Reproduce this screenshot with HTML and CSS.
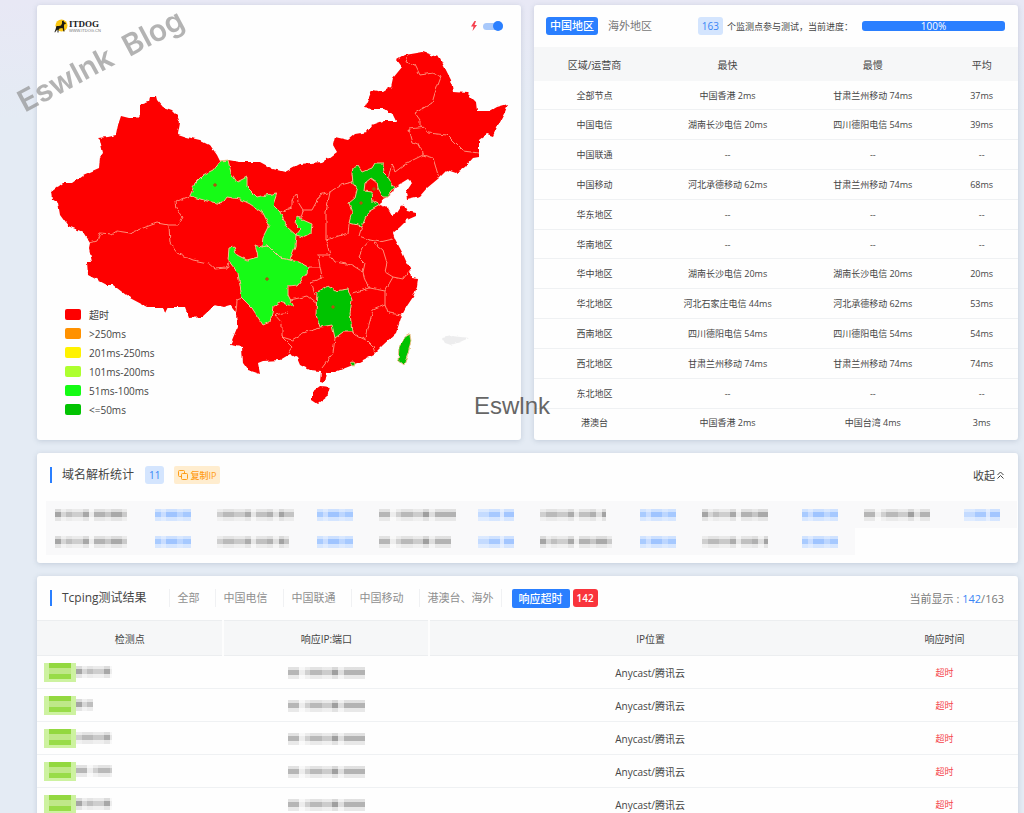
FILE: index.html
```html
<!DOCTYPE html>
<html lang="zh-CN">
<head>
  <meta charset="UTF-8" />
  <meta name="viewport" content="width=device-width, initial-scale=1.0" />
  <title>Tcping - ITDOG</title>
  <link rel="stylesheet" href="styles.css">
</head>
<body>
  <main class="page">
    <div class="top-row">
      <section class="card map-card">
        <div class="map-toolbar">
          <a class="logo" href="#">
            <svg width="14" height="14" viewBox="0 0 28 28" aria-hidden="true">
              <circle cx="15" cy="13" r="12" fill="#fbc712"/>
              <path d="M19 3l1 3 4 2-1 2-3 1 0 6 1 8-2 0-2-7-6 1-2 3 0 5-2 0 0-6-3 3-2 3-1-1 2-5 2-7 5 0 4-1 2-4 0-5z" fill="#1d1a10"/>
            </svg>
            <span class="logo-text">
              <b>ITDOG</b>
              <small>WWW.ITDOG.CN</small>
            </span>
          </a>
          <label class="speed">
            <svg width="8" height="10" viewBox="0 0 8 10" aria-hidden="true"><path d="M4.5 0L1 5.5h2.5L2.5 10 7 4H4.5L6 0z" fill="#f5414f"/></svg>
            <input type="checkbox" class="switch" aria-label="极速模式" checked>
          </label>
        </div>

        <svg class="map" viewBox="37 47 484 393" role="img" aria-label="中国地图">
          <defs>
            <filter id="coast" x="-5%" y="-5%" width="110%" height="110%">
              <feTurbulence type="fractalNoise" baseFrequency="0.2" numOctaves="1" seed="4" result="n"/>
              <feDisplacementMap in="SourceGraphic" in2="n" scale="4" xChannelSelector="R" yChannelSelector="G"/>
            </filter>
          </defs>
          <g filter="url(#coast)">
            <!-- mainland -->
            <path class="lv-timeout" d="M98 138L107 137 116 135 118 125 121 116 129 118 137 118 140 115 140 105 149 102 150 96 156 96 157 100 163 107 172 110 177 115 180 123 178 134 187 137 200 140 210 145 217 155 220 161 228 160 240 162 253 162 260 162 273 169 285 172 300 164 322 162 329 158 337 152 333 145 335 137 348 140 355 134 367 132 372 125 383 121 396 121 393 115 384 109 373 109 364 108 367 102 372 90 383 92 391 87 393 78 402 67 397 60 405 55 423 52 440 58 445 68 451 80 453 92 467 93 476 102 477 111 490 111 497 107 508 104 505 112 498 125 493 136 487 134 479 140 479 157 473 158 465 167 456 173 447 170 439 178 427 188 420 196 407 199 406 192 412 183 408 179 395 187 393 192 387 197 381 200 380 205 388 208 392 215 397 213 403 204 407 211 416 213 416 216 407 220 400 227 393 233 395 239 402 252 406 261 410 268 411 278 418 279 417 287 413 297 407 306 402 315 396 333 383 345 373 355 353 365 335 372 327 372 325 383 320 382 321 371 310 370 300 365 297 358 290 354 280 360 263 361 258 363 260 374 248 370 243 363 242 347 230 345 237 328 236 313 230 305 223 307 215 305 202 317 189 318 185 307 168 307 165 313 163 307 147 307 130 298 113 285 107 285 88 275 87 262 92 262 89 248 90 243 83 232 68 226 60 215 58 203 52 199 51 192 63 183 72 183 83 175 99 168 100 157 103 153 100 140z"/>
            <!-- hainan -->
            <path class="lv-timeout" d="M330 387L327 397 318 404 312 400 312 392 320 386z"/>

            <g class="borders">
              <path d="M90 243L97 241 100 233 112 234 117 231 130 233 143 228 157 223 168 225 178 225 182 217 176 208 175 202 190 196"/>
              <path d="M169 226L170 243 177 253 193 260 208 263 215 269 227 268 230 260M242 298L237 300 236 313"/>
              <path d="M408 56L406 62 415 65 420 75 433 73 441 77 435 93 432 103 415 113 420 120 420 127"/>
              <path d="M409 129L425 127 428 133 447 135 457 145 463 151 479 153M409 129L413 143 422 147 423 155 433 158 439 178"/>
              <path d="M423 155L407 163 395 172 392 163 390 172 388 177"/>
              <path d="M353 182L340 185 330 192 320 195 312 210 303 210 298 202 297 193 292 200 292 208 280 212M330 192L326 212 326 240 348 233 349 224"/>
              <path d="M303 210L301 217 297 218M362 226L359 236 370 240 380 242 393 239"/>
              <path d="M326 240L330 255 335 262 352 265 363 272 365 280 370 288 385 291 393 277 403 279 410 270"/>
              <path d="M370 240L363 248 359 257 365 263 363 272M373 242L383 250 387 263 385 272 393 277"/>
              <path d="M370 288L352 293M385 291L385 305 373 310 368 328 366 340 355 335 352 332M385 305L388 313 402 315M366 340L373 347 375 353"/>
              <path d="M330 255L318 255 320 267 308 267M320 267L322 278 311 282 315 295M290 300L308 296 317 303"/>
              <path d="M288 312L275 315 282 323 282 337 292 340 303 333 320 328M282 337L292 347 288 353M335 338L333 353 322 368"/>
            </g>

            <!-- gansu, sichuan -->
            <path class="lv-100" d="M190 196L195 183 203 175 213 170 220 161 228 160 231 173 237 182 247 177 247 187 257 197 261 196 277 193 273 205 280 212 287 227 296 235 301 229 296 224 297 217 303 220 312 224 311 233 303 237 296 235 295 247 290 260 280 258 268 246 262 247 263 237 269 225 263 213 250 204 240 199 227 197 222 204 207 201z"/>
            <path class="lv-100" d="M290 260L299 262 308 267 307 273 298 285 288 286 288 295 294 307 280 302 273 307 270 322 263 325 252 308 242 298 238 273 228 260 229 248 234 247 237 255 247 260 258 257 255 245 262 247 268 246 280 258z"/>
            <!-- hebei -->
            <path class="lv-50" fill-rule="evenodd" d="M353 168L358 166 362 172 372 168 375 163 383 163 384 173 388 177 394 188 387 197 383 197 378 188 377 182 371 178 365 183 364 191 372 192 373 202 380 205 368 212 362 226 349 223 352 212 349 203 355 198 357 190 353 183 352 173z"/>
            <!-- hunan -->
            <path class="lv-50" d="M317 292L328 286 335 291 348 289 352 300 350 313 352 332 343 332 335 338 332 325 320 327 316 315z"/>
            <!-- taiwan, hong kong -->
            <path class="lv-50" d="M410 334L411 341 408 354 404 365 398 360 399 347 405 337z"/>
            <circle class="lv-50" cx="353" cy="364" r="2"/>
            <path fill="#ededee" d="M442 338L452 336 469 338 460 342 451 345 445 343z"/>
          </g>
          <g class="points">
            <circle cx="215" cy="185" r="1.3"/>
            <circle cx="267" cy="279" r="1.3"/>
            <circle cx="361" cy="203" r="1.3"/>
            <circle cx="333" cy="307" r="1.3"/>
            <circle cx="374" cy="189" r="1.3"/>
          </g>
        </svg>

        <ul class="legend">
          <li><i class="swatch c-timeout"></i>超时</li>
          <li><i class="swatch c-250"></i>&gt;250ms</li>
          <li><i class="swatch c-201"></i>201ms-250ms</li>
          <li><i class="swatch c-101"></i>101ms-200ms</li>
          <li><i class="swatch c-51"></i>51ms-100ms</li>
          <li><i class="swatch c-50"></i>&lt;=50ms</li>
        </ul>
      </section>

      <section class="card region-card">
        <div class="region-head">
          <button class="region-tab active">中国地区</button>
          <button class="region-tab">海外地区</button>
          <div class="progress-info">
            <span class="badge">163</span>
            <span>个监测点参与测试，当前进度：</span>
          </div>
          <div class="progress" role="progressbar" aria-valuenow="100" aria-valuemin="0" aria-valuemax="100">100%</div>
        </div>
        <div class="region-body">
          <table class="region-table">
            <thead>
              <tr><th>区域/运营商</th><th>最快</th><th>最慢</th><th>平均</th></tr>
            </thead>
            <tbody>
              <tr><td>全部节点</td><td>中国香港 2ms</td><td>甘肃兰州移动 74ms</td><td>37ms</td></tr>
              <tr><td>中国电信</td><td>湖南长沙电信 20ms</td><td>四川德阳电信 54ms</td><td>39ms</td></tr>
              <tr><td>中国联通</td><td>--</td><td>--</td><td>--</td></tr>
              <tr><td>中国移动</td><td>河北承德移动 62ms</td><td>甘肃兰州移动 74ms</td><td>68ms</td></tr>
              <tr><td>华东地区</td><td>--</td><td>--</td><td>--</td></tr>
              <tr><td>华南地区</td><td>--</td><td>--</td><td>--</td></tr>
              <tr><td>华中地区</td><td>湖南长沙电信 20ms</td><td>湖南长沙电信 20ms</td><td>20ms</td></tr>
              <tr><td>华北地区</td><td>河北石家庄电信 44ms</td><td>河北承德移动 62ms</td><td>53ms</td></tr>
              <tr><td>西南地区</td><td>四川德阳电信 54ms</td><td>四川德阳电信 54ms</td><td>54ms</td></tr>
              <tr><td>西北地区</td><td>甘肃兰州移动 74ms</td><td>甘肃兰州移动 74ms</td><td>74ms</td></tr>
              <tr><td>东北地区</td><td>--</td><td>--</td><td>--</td></tr>
              <tr><td>港澳台</td><td>中国香港 2ms</td><td>中国台湾 4ms</td><td>3ms</td></tr>
            </tbody>
          </table>
        </div>
      </section>
    </div>

    <section class="card">
      <div class="card-head">
        <h2>域名解析统计</h2>
        <span class="badge badge-count">11</span>
        <button class="copy-btn">
          <svg width="10" height="10" viewBox="0 0 10 10" fill="none" stroke="#ff9d17" aria-hidden="true"><path d="M3 6.5H1.5a1 1 0 0 1-1-1v-4a1 1 0 0 1 1-1h4a1 1 0 0 1 1 1V3"/><rect x="3.5" y="3.5" width="6" height="6" rx="1"/></svg>
          复制IP
        </button>
        <button class="fold-btn">
          收起
          <svg width="7" height="8" viewBox="0 0 7 8" fill="none" stroke="#444" aria-hidden="true"><path d="M.5 4l3-3 3 3M.5 7.5l3-3 3 3"/></svg>
        </button>
      </div>
      <div class="ip-grid">
        <div class="ip-item"><span class="mask w-l"></span><span class="mask blue w-s"></span></div>
        <div class="ip-item"><span class="mask m2 w-xl"></span><span class="mask blue m2 w-s"></span></div>
        <div class="ip-item"><span class="mask m3 w-xl"></span><span class="mask blue m3 w-s"></span></div>
        <div class="ip-item"><span class="mask m2 w-m"></span><span class="mask blue w-s"></span></div>
        <div class="ip-item"><span class="mask w-m"></span><span class="mask blue m2 w-s"></span></div>
        <div class="ip-item"><span class="mask m3 w-m"></span><span class="mask blue m3 w-s"></span></div>
        <div class="ip-item"><span class="mask w-l"></span><span class="mask blue m2 w-s"></span></div>
        <div class="ip-item"><span class="mask m2 w-l"></span><span class="mask blue w-s"></span></div>
        <div class="ip-item"><span class="mask m3 w-l"></span><span class="mask blue m3 w-s"></span></div>
        <div class="ip-item"><span class="mask w-l"></span><span class="mask blue w-s"></span></div>
        <div class="ip-item"><span class="mask m2 w-m"></span><span class="mask blue m2 w-s"></span></div>
      </div>
    </section>

    <section class="card">
      <div class="card-head">
        <h2>Tcping测试结果</h2>
        <nav class="tabs">
          <a href="#">全部</a>
          <a href="#">中国电信</a>
          <a href="#">中国联通</a>
          <a href="#">中国移动</a>
          <a href="#">港澳台、海外</a>
        </nav>
        <button class="timeout-btn">响应超时</button>
        <span class="badge badge-red">142</span>
        <span class="showing">当前显示 : <b>142</b>/163</span>
      </div>
      <table class="result-table">
        <thead>
          <tr><th>检测点</th><th>响应IP:端口</th><th>IP位置</th><th>响应时间</th></tr>
        </thead>
        <tbody>
          <tr><td><div class="node"><span class="isp"></span><span class="mask w-s"></span></div></td><td><span class="mask m3 w-xl"></span></td><td>Anycast/腾讯云</td><td class="red">超时</td></tr>
          <tr><td><div class="node"><span class="isp"></span><span class="mask w-xs"></span></div></td><td><span class="mask m3 w-xl"></span></td><td>Anycast/腾讯云</td><td class="red">超时</td></tr>
          <tr><td><div class="node"><span class="isp"></span><span class="mask m2 w-s"></span></div></td><td><span class="mask m3 w-xl"></span></td><td>Anycast/腾讯云</td><td class="red">超时</td></tr>
          <tr><td><div class="node"><span class="isp"></span><span class="mask m3 w-s"></span></div></td><td><span class="mask m3 w-xl"></span></td><td>Anycast/腾讯云</td><td class="red">超时</td></tr>
          <tr><td><div class="node"><span class="isp"></span><span class="mask w-s"></span></div></td><td><span class="mask m3 w-xl"></span></td><td>Anycast/腾讯云</td><td class="red">超时</td></tr>
        </tbody>
      </table>
    </section>

    <div class="watermark-blog">Eswlnk&nbsp; Blog</div>
    <div class="watermark">Eswlnk</div>
  </main>
</body>
</html>
```
FILE: styles.css
```css
:root {
  --blue: #2a7fff;
  --text: #454545;
  --line: #eff1f3;
  --head: #f6f7f8;
}

* {
  box-sizing: border-box;
}

body {
  margin: 0;
  font-family: "Open Sans", "Noto Sans CJK SC", sans-serif;
  font-size: 10px;
  color: var(--text);
  background: linear-gradient(#e8e8f5, #e4ebf4 120px);
}

button {
  font-family: inherit;
  border: none;
  padding: 0;
  background: none;
  cursor: pointer;
}

a {
  color: inherit;
  text-decoration: none;
}

.page {
  position: relative;
  display: flex;
  flex-direction: column;
  gap: 13px;
  height: 100vh;
  overflow: hidden;
  padding: 5px 6px 0 37px;
}

.card {
  flex-shrink: 0;
  background: #fefefe;
  border-radius: 3px;
  box-shadow: 0 1px 5px rgba(120, 135, 160, 0.3);
}

.top-row {
  flex-shrink: 0;
  display: grid;
  grid-template-columns: 1fr 1fr;
  gap: 13px;
}

/* map */
.map-card {
  position: relative;
}

.map-toolbar {
  display: flex;
  justify-content: space-between;
  align-items: center;
  height: 42px;
  padding: 0 18px 0 17px;
}

.logo,
.speed {
  display: flex;
  align-items: center;
  gap: 1px;
}

.speed {
  gap: 5px;
}

.logo-text {
  display: flex;
  flex-direction: column;
  color: #222;
}

.logo-text b {
  font: bold 9px/9px "Liberation Serif", serif;
}

.logo-text small {
  font: 4px/4px "Liberation Sans", sans-serif;
  color: #777;
}

.switch {
  appearance: none;
  display: flex;
  justify-content: flex-end;
  align-items: center;
  width: 20px;
  height: 7px;
  margin: 0;
  border-radius: 4px;
  background: #a9c9fb;
}

.switch::before {
  content: "";
  width: 10px;
  height: 10px;
  border-radius: 50%;
  background: var(--blue);
}

.map {
  display: block;
  width: 100%;
}

.lv-timeout {
  fill: #fe0000;
}

.lv-100 {
  fill: #14fb14;
}

.lv-50 {
  fill: #02c302;
}

.lv-100,
.lv-50 {
  stroke: #f3c08c;
  stroke-width: 1;
}

.borders {
  fill: none;
  stroke: #ff8d78;
  stroke-width: 1;
}

.points {
  fill: #f03010;
  stroke: #8a6a10;
  stroke-width: 1;
}

.legend {
  position: absolute;
  left: 28px;
  bottom: 21px;
  margin: 0;
  padding: 0;
  list-style: none;
}

.legend li {
  display: flex;
  align-items: center;
  gap: 8px;
  height: 19px;
}

.swatch {
  width: 16px;
  height: 11px;
  border-radius: 2px;
}

.c-timeout { background: #fe0000; }
.c-250 { background: #ff9100; }
.c-201 { background: #fff200; }
.c-101 { background: #adff2f; }
.c-51 { background: #14fb14; }
.c-50 { background: #02c302; }

/* region table */
.region-card {
  display: flex;
  flex-direction: column;
  padding-bottom: 3px;
}

.region-head {
  display: flex;
  align-items: center;
  height: 42px;
  padding: 0 13px 0 12px;
}

.region-tab {
  height: 18px;
  padding: 0 4px;
  font-size: 11px;
  line-height: 18px;
  color: #777;
  margin-right: 6px;
  border-radius: 3px;
}

.region-tab.active {
  background: var(--blue);
  color: #fff;
  font-weight: 500;
}

.progress-info {
  display: flex;
  align-items: center;
  gap: 4px;
  margin-left: auto;
  font-size: 9px;
}

.badge {
  height: 18px;
  padding: 0 4px;
  border-radius: 3px;
  font-size: 10px;
  line-height: 18px;
  background: #d4e5fe;
  color: #3a86f5;
}

.progress {
  width: 143px;
  height: 10px;
  margin-left: 9px;
  border-radius: 3px;
  background: var(--blue);
  color: #fff;
  font-size: 10px;
  line-height: 10px;
  text-align: center;
}

.region-body {
  flex: 1;
  display: grid;
}

table {
  width: 100%;
  table-layout: fixed;
  border-collapse: collapse;
}

th {
  font-weight: normal;
  background: var(--head);
}

th,
td {
  padding: 0;
  text-align: center;
}

td {
  border-bottom: 1px solid var(--line);
}

.region-table {
  height: 100%;
  font-size: 9px;
}

.region-table th {
  height: 34px;
  width: 30%;
  font-size: 10px;
}

.region-table th:first-child {
  width: 25%;
}

.region-table th:last-child {
  width: 15%;
}

.region-table tr:last-child td {
  border-bottom: none;
}

/* section heads */
.card-head {
  display: flex;
  align-items: center;
  height: 44px;
  padding: 0 14px 0 13px;
}

h2 {
  margin: 0;
  padding-left: 10px;
  border-left: 2px solid var(--blue);
  font-size: 12px;
  font-weight: normal;
  line-height: 16px;
}

.badge-count {
  margin-left: 11px;
}

.copy-btn {
  display: flex;
  align-items: center;
  gap: 2px;
  height: 18px;
  margin-left: 10px;
  padding: 0 4px;
  border-radius: 2px;
  background: #ffedcf;
  color: #ff9d17;
  font-size: 9px;
  font-weight: 500;
}

.fold-btn {
  display: flex;
  align-items: center;
  gap: 2px;
  margin-left: auto;
  color: #444;
  font-size: 11px;
}

.ip-grid {
  display: grid;
  grid-template-columns: repeat(6, 1fr);
  padding: 4px 1px 8px 9px;
}

.ip-item {
  display: flex;
  justify-content: space-between;
  align-items: center;
  height: 27px;
  padding: 1px 17px 0 9px;
  background: #f9f9fa;
}

/* pixelated hidden addresses */
.mask {
  display: inline-block;
  height: 12px;
  vertical-align: middle;
  background:
    linear-gradient(transparent 8px, rgba(255, 255, 255, 0.7) 8px),
    linear-gradient(rgba(255, 255, 255, 0.6) 3px, transparent 3px),
    linear-gradient(90deg, #a5a5a5 6px, #d6d6d6 6px 11px, #bfbfbf 11px 17px, #cecece 17px 28px, #a8a8a8 28px 34px, #ececec 34px 39px, #b2b2b2 39px 50px, #c6c6c6 50px 56px, #a9a9a9 56px 67px, #cacaca 67px);
}

.mask.m2 {
  background:
    linear-gradient(transparent 8px, rgba(255, 255, 255, 0.7) 8px),
    linear-gradient(rgba(255, 255, 255, 0.6) 3px, transparent 3px),
    linear-gradient(90deg, #cfcfcf 6px, #bababa 6px 17px, #c9c9c9 17px 28px, #acacac 28px 34px, #e6e6e6 34px 39px, #c0c0c0 39px 50px, #b0b0b0 50px 56px, #dedede 56px 62px, #a3a3a3 62px 67px, #c4c4c4 67px);
}

.mask.m3 {
  background:
    linear-gradient(transparent 8px, rgba(255, 255, 255, 0.7) 8px),
    linear-gradient(rgba(255, 255, 255, 0.6) 3px, transparent 3px),
    linear-gradient(90deg, #b6b6b6 11px, #ededed 11px 17px, #d0d0d0 17px 22px, #b9b9b9 22px 34px, #cccccc 34px 44px, #9f9f9f 44px 50px, #dddddd 50px 56px, #b3b3b3 56px);
}

.mask.blue {
  background:
    linear-gradient(transparent 8px, rgba(235, 243, 255, 0.7) 8px),
    linear-gradient(rgba(235, 243, 255, 0.6) 3px, transparent 3px),
    linear-gradient(90deg, #a9cbff 6px, #c9ddff 6px 11px, #9fc4ff 11px 22px, #bcd6ff 22px 28px, #a6c9ff 28px);
}

.mask.blue.m3 {
  background:
    linear-gradient(transparent 8px, rgba(235, 243, 255, 0.7) 8px),
    linear-gradient(rgba(235, 243, 255, 0.6) 3px, transparent 3px),
    linear-gradient(90deg, #c4dbff 11px, #a7c9ff 11px 22px, #dbe8ff 22px 26px, #a3c6ff 26px);
}

.w-xs { width: 17px; }
.w-s { width: 36px; }
.w-m { width: 66px; }
.w-l { width: 72px; }
.w-xl { width: 77px; }

/* results */
.tabs {
  display: flex;
  margin-left: 22px;
}

.tabs a {
  padding: 0 15px 0 8px;
  border-left: 1px solid #f0f1f3;
  color: #8f8f8f;
  font-size: 11px;
  line-height: 18px;
}

.tabs a:last-child {
  padding-right: 7px;
  border-right: 1px solid #f0f1f3;
}

.timeout-btn {
  height: 19px;
  margin-left: 10px;
  padding: 0 7px;
  border-radius: 2px;
  background: var(--blue);
  color: #fff;
  font-size: 11px;
  font-weight: 500;
  line-height: 19px;
}

.badge-red {
  margin-left: 3px;
  background: #f9343c;
  color: #fff;
  font-weight: 600;
}

.showing {
  margin-left: auto;
  color: #777;
  font-size: 11px;
}

.showing b {
  color: #3a86f5;
  font-weight: normal;
}

.result-table th {
  width: 19%;
  height: 35px;
  border: 1px solid #eceef0;
  border-width: 1px 0;
}

.result-table th + th {
  width: 21%;
  border-left: 2px solid #fdfdfd;
}

.result-table th:nth-child(3) {
  width: 45%;
}

.result-table th:last-child {
  width: 15%;
  border-left: none;
}

.result-table td {
  height: 33px;
}

.result-table .red {
  color: #f5454c;
  font-size: 9px;
}

.node {
  display: flex;
  align-items: center;
  padding-left: 7px;
}

.isp {
  width: 32px;
  height: 19px;
  border: solid #cdf2a0;
  border-width: 0 5px 3px;
  background: linear-gradient(#93d840 5px, #bfe889 5px 11px, #98dc48 11px);
}

/* overlays */
.watermark-blog {
  position: absolute;
  left: 9px;
  top: 40px;
  font: 600 30px/40px Inter, sans-serif;
  color: #8c8c8c;
  opacity: 0.65;
  white-space: nowrap;
  transform: rotate(-28deg);
}

.watermark {
  position: absolute;
  left: 474px;
  top: 392px;
  font: 24px/28px "Liberation Sans", sans-serif;
  color: #666;
}
```
